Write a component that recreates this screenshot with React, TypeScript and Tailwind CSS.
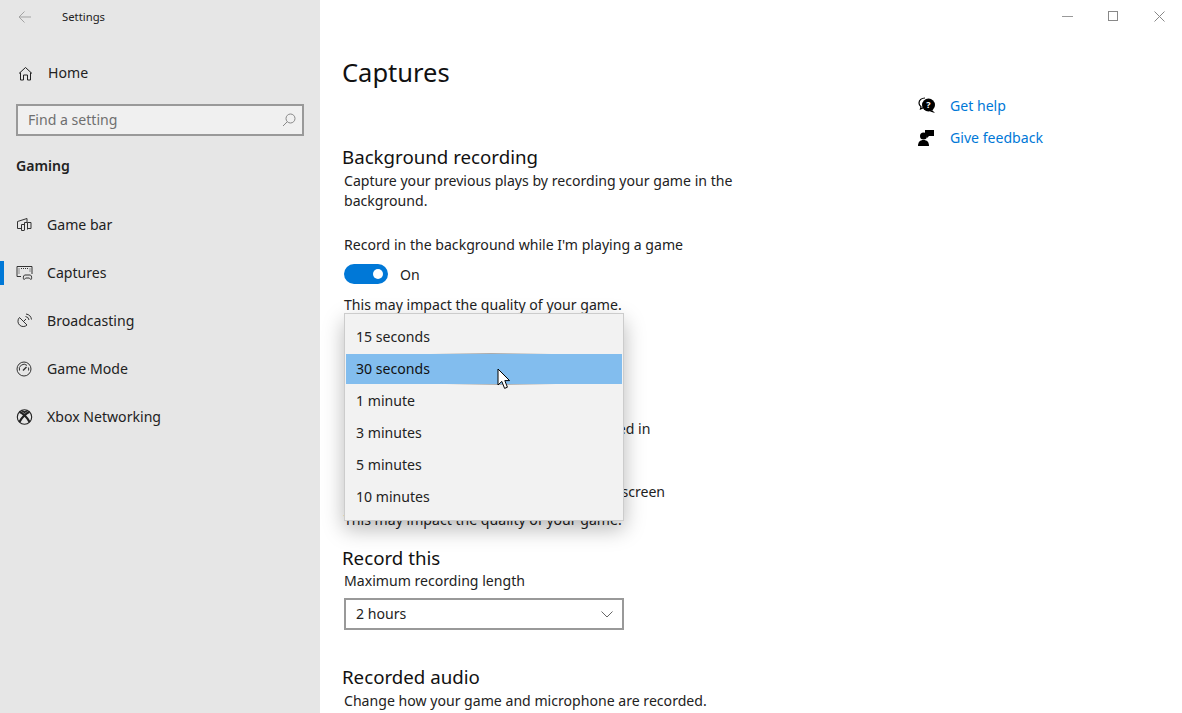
const font = "font-['Noto_Sans','Open_Sans',sans-serif]";

const navItems = [
  { label: "Game bar", icon: <GameBarIcon /> },
  { label: "Captures", icon: <CapturesIcon />, active: true },
  { label: "Broadcasting", icon: <BroadcastIcon /> },
  { label: "Game Mode", icon: <GameModeIcon /> },
  { label: "Xbox Networking", icon: <XboxIcon /> },
];

const options = ["15 seconds", "30 seconds", "1 minute", "3 minutes", "5 minutes", "10 minutes"];

function GameBarIcon() {
  return (
    <svg width="16" height="16" viewBox="0 0 16 16" fill="none" stroke="#333" strokeWidth="1">
      <path d="M1.5 11.5V4.5L11 1.5V5M1.5 11.5H5.5M5.5 13.5V7.5H8.5V13M8.5 12.5V5.5H11.5V12.5M5.5 13.5H8.5M11.5 11.5H15V5.5H11.5" />
    </svg>
  );
}

function CapturesIcon() {
  return (
    <svg width="17" height="16" viewBox="0 0 17 16" fill="none" stroke="#333" strokeWidth="1">
      <path d="M5 11.5H1V1.5H16V9" />
      <path d="M3 3.5V9.5M14 3.5V7M5 3.5H12" strokeDasharray="1 1" />
      <path d="M8 14.5C7 14.5 7 10 9 10H14C16 10 16 14.5 15 14.5C14 14.5 14 13 13 13H10C9 13 9 14.5 8 14.5Z" />
    </svg>
  );
}

function BroadcastIcon() {
  return (
    <svg width="17" height="16" viewBox="0 0 17 16" fill="none" stroke="#333" strokeWidth="1">
      <path d="M3.5 4.5L11 12A5.3 5.3 0 0 1 3.5 4.5Z" />
      <path d="M7.5 8.5L10 6" />
      <path d="M9.5 3.5A4 4 0 0 1 13 7M10 1A6.5 6.5 0 0 1 15.5 6.5" />
    </svg>
  );
}

function GameModeIcon() {
  return (
    <svg width="16" height="16" viewBox="0 0 16 16" fill="none" stroke="#333" strokeWidth="1">
      <circle cx="8" cy="8" r="7" />
      <path d="M3.5 9.5A4.7 4.7 0 0 1 11 4.4M12.4 6.5A4.7 4.7 0 0 1 12.5 9.5" />
      <path d="M7 9.5L10.5 6" strokeWidth="1.4" />
    </svg>
  );
}

function XboxIcon() {
  return (
    <svg width="17" height="16" viewBox="0 0 17 16" fill="none" stroke="#222" strokeWidth="1.1">
      <circle cx="8.5" cy="8" r="7.2" />
      <path d="M3.4 2.9C6 3.4 11 8 13.6 13.1M13.6 2.9C11 3.4 6 8 3.4 13.1" strokeWidth="2.2" />
      <path d="M5.5 1.8C7 2.2 8 3 8.5 3.5C9 3 10 2.2 11.5 1.8" strokeWidth="1.6" />
    </svg>
  );
}

function SectionTitle({ children, className }: { children: string; className: string }) {
  return <h2 className={`text-[18.7px] leading-[26px] text-[#111] ${className}`}>{children}</h2>;
}

function BodyLine({ children, className }: { children: string; className: string }) {
  return <p className={`text-[14.1px] leading-[20px] text-[#222] whitespace-nowrap ${className}`}>{children}</p>;
}

export default function App() {
  return (
    <div className={`flex h-[713px] w-[1182px] overflow-hidden bg-white ${font}`}>
      <aside className="flex w-[320px] shrink-0 flex-col bg-[#e6e6e6]">
        <div className="flex h-[34px] items-center pl-[18px]">
          <svg width="14" height="14" viewBox="0 0 14 14" fill="none" stroke="#a3a3a3" strokeWidth="1">
            <path d="M13 7H1M6.5 1.5L1 7L6.5 12.5" />
          </svg>
          <span className="ml-[30px] text-[11.3px] text-[#222]">Settings</span>
        </div>
        <div className="mt-[23px] flex h-8 items-center pl-[18px]">
          <svg width="15" height="15" viewBox="0 0 15 15" fill="none" stroke="#222" strokeWidth="1">
            <path d="M1 7.5L7.5 1.5L14 7.5M2.5 6.5V14H5.5V9H9.5V14H12.5V6.5" />
          </svg>
          <span className="ml-[15px] text-[14.1px] text-[#222]">Home</span>
        </div>
        <div className="ml-4 mt-[15px] flex h-8 w-[288px] items-center justify-between border-2 border-[#999] bg-[#f0f0f0] pl-[10px] pr-[6px]">
          <span className="text-[14.1px] text-[#6f6f6f]">Find a setting</span>
          <svg width="14" height="14" viewBox="0 0 14 14" fill="none" stroke="#888" strokeWidth="1">
            <circle cx="8.5" cy="5.5" r="4.5" />
            <path d="M5.2 8.8L1 13" />
          </svg>
        </div>
        <div className="ml-4 mt-[20px] text-[14.1px] font-semibold leading-[20px] text-[#222]">Gaming</div>
        <nav className="mt-[37px] flex flex-col gap-6">
          {navItems.map((item) => (
            <div key={item.label} className="relative flex h-6 items-center pl-4">
              {item.active && <div className="absolute left-0 top-0 h-6 w-1 bg-[#0078d7]" />}
              <span className="flex w-[31px] items-center">{item.icon}</span>
              <span className="text-[14.1px] text-[#222]">{item.label}</span>
            </div>
          ))}
        </nav>
      </aside>

      <main className="relative flex-1 overflow-hidden">
        <div className="pl-[22px]">
          <h1 className="mt-[52px] text-[25.5px] leading-[40px] text-[#111]">Captures</h1>
          <SectionTitle className="mt-[52px]">Background recording</SectionTitle>
          <div className="ml-[2px] w-[400px]">
            <BodyLine className="mt-[1px]">Capture your previous plays by recording your game in the</BodyLine>
            <BodyLine className="">background.</BodyLine>
            <BodyLine className="mt-[24px]">Record in the background while I'm playing a game</BodyLine>
            <div className="mt-[9px] flex h-5 items-center">
              <div className="flex h-5 w-11 items-center justify-end rounded-full bg-[#0078d7] pr-[5px]">
                <div className="h-[10px] w-[10px] rounded-full bg-white" />
              </div>
              <span className="ml-3 pt-[2px] text-[14.1px] text-[#222]">On</span>
            </div>
            <BodyLine className="mt-[11px]">This may impact the quality of your game.</BodyLine>
            <BodyLine className="mt-[104px]">Record in the background while it's plugged in</BodyLine>
            <BodyLine className="mt-[43px]">Record in the background when I cast my screen</BodyLine>
            <BodyLine className="mt-[8px]">This may impact the quality of your game.</BodyLine>
          </div>
          <SectionTitle className="mt-[15px]">Record this</SectionTitle>
          <div className="ml-[2px]">
            <BodyLine className="mt-0">Maximum recording length</BodyLine>
            <div className="mt-[7px] flex h-8 w-[280px] items-center justify-between border-2 border-[#999] bg-white pl-[10px] pr-[9px]">
              <span className="text-[14.1px] text-[#222]">2 hours</span>
              <svg width="12" height="7" viewBox="0 0 12 7" fill="none" stroke="#666" strokeWidth="1">
                <path d="M0.5 0.5L6 6L11.5 0.5" />
              </svg>
            </div>
          </div>
          <SectionTitle className="mt-[34px]">Recorded audio</SectionTitle>
          <BodyLine className="ml-[2px] mt-[1px]">Change how your game and microphone are recorded.</BodyLine>
        </div>

        {/* open dropdown sits over the rows */}
        <div className="absolute left-[24px] top-[313px] w-[280px] border border-[#ccc] bg-[#f2f2f2] py-[7px] shadow-[0_8px_20px_rgba(0,0,0,0.28)]">
          {options.map((opt, i) => (
            <div
              key={opt}
              className={
                i === 1
                  ? "relative mx-px flex h-[30px] my-px items-center bg-[#82bdee] pl-[10px] text-[14.1px] text-[#111]"
                  : "mx-px flex h-8 items-center pl-[10px] text-[14.1px] text-[#222]"
              }
            >
              {opt}
              {i === 1 && (
                <>
                  <div className="absolute left-[85px] top-[-1px] h-px w-[120px] bg-gradient-to-r from-transparent via-[#aaa] to-transparent" />
                  <div className="absolute left-[100px] bottom-[-1px] h-px w-[110px] bg-gradient-to-r from-transparent via-[#aaa] to-transparent" />
                </>
              )}
            </div>
          ))}
          <svg className="absolute left-[152px] top-[54px]" width="14" height="22" viewBox="0 0 14 22">
            <path d="M1 1V17L4.8 13.4L7.6 20.4L10.4 19.2L7.8 12.6H12.6L1 1Z" fill="white" stroke="black" strokeWidth="1" />
          </svg>
        </div>

        <div className="absolute left-[598px] top-[94px] flex flex-col gap-[8px]">
          <div className="flex h-6 items-center">
            <svg width="18" height="18" viewBox="0 0 18 18">
              <path d="M7 1C3.5 1 1 3 1 6C1 7.6 1.7 8.8 3 9.8L2.5 12L5.5 10.6" fill="none" stroke="black" strokeWidth="1.2" />
              <circle cx="10.5" cy="8" r="6.5" fill="black" />
              <path d="M14 13L17 16L12 14.5Z" fill="black" />
              <text x="10.5" y="11" textAnchor="middle" fontSize="9" fontWeight="700" fill="white">?</text>
            </svg>
            <span className="ml-[14px] text-[14.1px] text-[#0078d7]">Get help</span>
          </div>
          <div className="flex h-6 items-center">
            <svg width="18" height="18" viewBox="0 0 18 18">
              <circle cx="5.5" cy="7" r="3.5" fill="black" />
              <path d="M0 17C0 13 2 11 5.5 11C9 11 11 13 11 17Z" fill="black" />
              <path d="M7 1H16V7H11L9 9V6.5H7Z" fill="black" />
            </svg>
            <span className="ml-[14px] text-[14.1px] text-[#0078d7]">Give feedback</span>
          </div>
        </div>

        <div className="absolute right-0 top-0 flex h-8 items-center text-[#999]">
          <div className="flex w-[46px] justify-center">
            <div className="h-px w-[11px] bg-[#999]" />
          </div>
          <div className="flex w-[46px] justify-center">
            <div className="h-[10px] w-[10px] border border-[#888]" />
          </div>
          <div className="flex w-[46px] justify-center">
            <svg width="11" height="11" viewBox="0 0 11 11" fill="none" stroke="#888" strokeWidth="1">
              <path d="M0.5 0.5L10.5 10.5M10.5 0.5L0.5 10.5" />
            </svg>
          </div>
        </div>
      </main>
    </div>
  );
}
